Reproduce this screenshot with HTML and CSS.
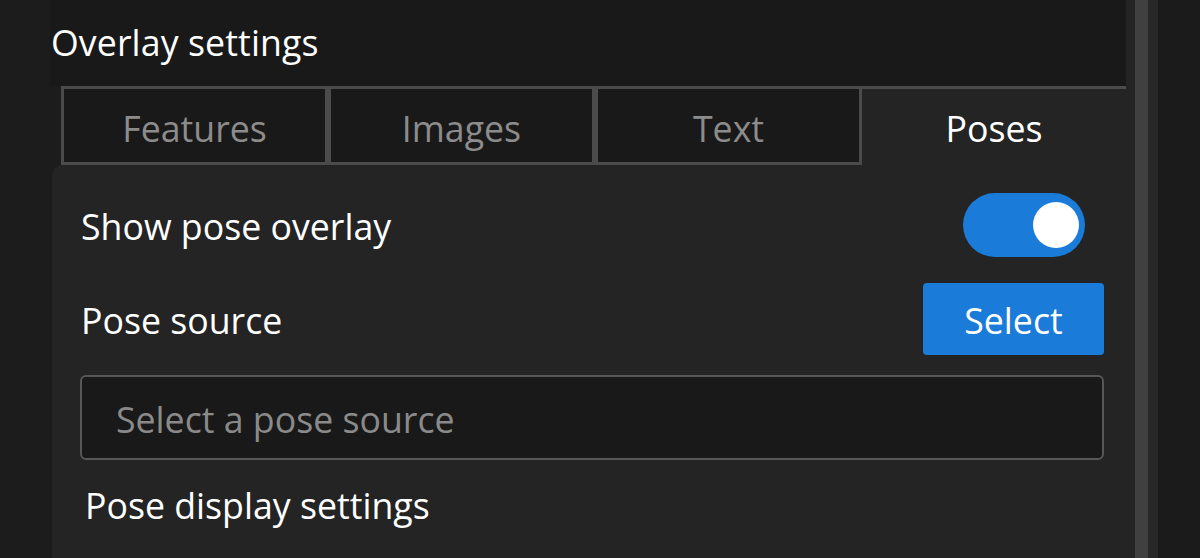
FILE: index.html
```html
<!DOCTYPE html>
<html lang="en">
<head>
<meta charset="utf-8">
<title>Overlay settings</title>
<link rel="stylesheet" href="styles.css">
</head>
<body>
<div class="app">
  <div class="gutter"></div>
  <div class="main">
    <div class="header"><span class="title">Overlay settings</span></div>
    <div class="tabs">
      <div class="tab">Features</div>
      <div class="tab">Images</div>
      <div class="tab">Text</div>
      <div class="tab active">Poses</div>
    </div>
    <div class="panel">
      <div class="row row-toggle">
        <span class="label">Show pose overlay</span>
        <div class="toggle"><div class="knob"></div></div>
      </div>
      <div class="row row-source">
        <span class="label">Pose source</span>
        <button class="btn">Select</button>
      </div>
      <div class="input"><span class="placeholder">Select a pose source</span></div>
      <div class="section">Pose display settings</div>
    </div>
  </div>
  <div class="strip"></div>
  <div class="scrollbar"></div>
  <div class="track"></div>
  <div class="outer"></div>
</div>
</body>
</html>
```
FILE: styles.css
```css
* { box-sizing: border-box; }
html, body { margin: 0; padding: 0; }
body {
  width: 1200px;
  height: 558px;
  overflow: hidden;
  background: #1c1c1c;
  font-family: "Open Sans", "Noto Sans", sans-serif;
  color: #ffffff;
}
.app {
  display: flex;
  height: 558px;
}
.gutter {
  width: 50px;
  flex: none;
  background: #1c1c1c;
}
.main {
  width: 1076px;
  flex: none;
  display: flex;
  flex-direction: column;
}
.header {
  height: 86px;
  background: #191919;
  display: flex;
  align-items: center;
  padding-left: 1px;
  padding-bottom: 3px;
}
.title {
  font-size: 35.7px;
  letter-spacing: 0.1px;
  color: #ffffff;
}
.tabs {
  display: flex;
  height: 79px;
  padding-left: 11px;
  background: #1c1c1c;
}
.tab {
  flex: 1;
  background: #191919;
  border: 3px solid #4b4b4b;
  display: flex;
  align-items: center;
  justify-content: center;
  font-size: 35.7px;
  color: #8c8c8c;
  padding-top: 4px;
}
.tab.active {
  background: #242424;
  border-left: none;
  border-right: none;
  border-bottom-color: transparent;
  color: #ffffff;
  flex: 0 0 264px;
}
.panel {
  flex: 1;
  margin-left: 2px;
  background: #242424;
  border-top-left-radius: 10px;
  padding: 28px 22px 0 28px;
  display: flex;
  flex-direction: column;
}
.row {
  display: flex;
  align-items: center;
  justify-content: space-between;
}
.label {
  font-size: 35.7px;
  color: #ffffff;
  padding-left: 1px;
}
.row-toggle { height: 64px; padding-top: 2px; }
.toggle {
  width: 122px;
  height: 64px;
  border-radius: 32px;
  background: #1a7bd9;
  margin-right: 19px;
  margin-top: -2px;
  display: flex;
  align-items: center;
  justify-content: flex-end;
  padding-right: 6px;
}
.knob {
  width: 46px;
  height: 46px;
  border-radius: 50%;
  background: #ffffff;
}
.row-source {
  height: 72px;
  margin-top: 26px;
  padding-top: 2px;
}
.btn {
  width: 181px;
  height: 72px;
  margin-top: -2px;
  border: none;
  border-radius: 4px;
  background: #1a7bd9;
  color: #ffffff;
  font-family: "Open Sans", "Noto Sans", sans-serif;
  font-size: 35.7px;
  padding: 2px 0 0 0;
}
.input {
  margin-top: 20px;
  height: 85px;
  background: #191919;
  border: 2px solid #575757;
  border-radius: 6px;
  display: flex;
  align-items: center;
  padding-left: 34px;
  padding-top: 2px;
}
.placeholder {
  font-size: 35.7px;
  color: #8a8a8a;
}
.section {
  margin-top: 21px;
  padding-left: 5px;
  font-size: 35.7px;
  color: #ffffff;
}
.strip {
  width: 9px;
  flex: none;
  background: #242424;
}
.scrollbar {
  width: 13px;
  flex: none;
  background: #404040;
}
.track {
  width: 10px;
  flex: none;
  background: #282828;
}
.outer {
  flex: 1;
  background: #1b1b1b;
}
```
